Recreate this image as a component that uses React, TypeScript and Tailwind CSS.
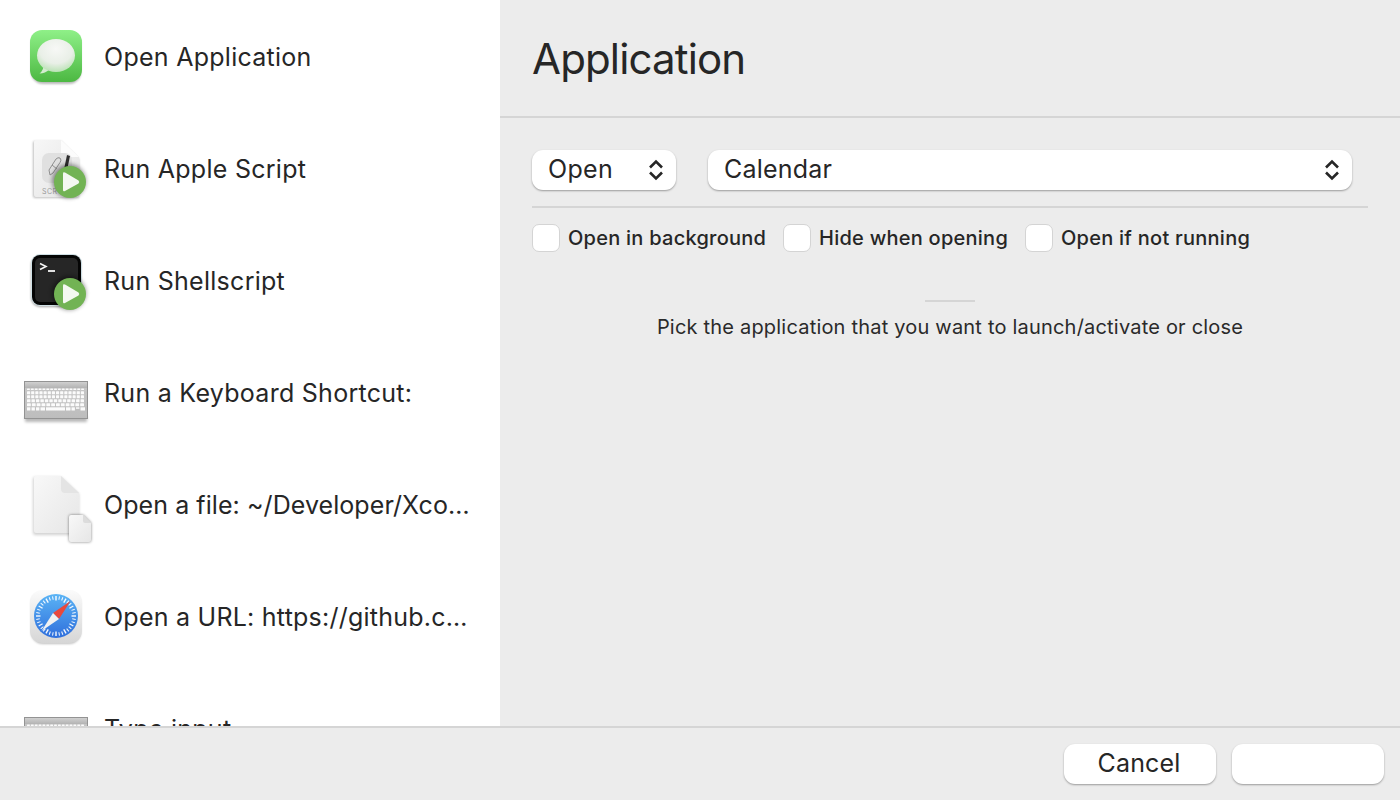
import React from "react";

const Badge = ({ id }: { id: string }) => (
  <g>
    <defs>
      <filter id={id} x="-40%" y="-40%" width="180%" height="180%">
        <feGaussianBlur stdDeviation="2" />
      </filter>
    </defs>
    <circle cx="45" cy="44" r="17" fill="#000" opacity="0.4" filter={`url(#${id})`} />
    <circle cx="46" cy="45" r="16" fill="#72b354" />
    <path d="M39 36.5 Q39 34.5 41 35.5 L54.5 43.5 Q56 45 54.5 46.5 L41 54 Q39 55 39 53 Z" fill="#f4f8f1" />
  </g>
);

const MessagesIcon = () => (
  <svg width="64" height="64" viewBox="0 0 64 64" className="overflow-visible">
    <defs>
      <linearGradient id="mg" x1="0" y1="0" x2="0" y2="1">
        <stop offset="0" stopColor="#8ff088" />
        <stop offset="1" stopColor="#4cb842" />
      </linearGradient>
      <radialGradient id="mb" cx="0.5" cy="0.3" r="0.8">
        <stop offset="0" stopColor="#f7f8f6" />
        <stop offset="0.55" stopColor="#e9efe7" />
        <stop offset="1" stopColor="#a9dda2" />
      </radialGradient>
      <filter id="ms" x="-20%" y="-20%" width="140%" height="140%">
        <feGaussianBlur stdDeviation="1.2" />
      </filter>
    </defs>
    <rect x="7" y="7" width="50" height="52" rx="12" fill="#000" opacity="0.28" filter="url(#ms)" />
    <rect x="6" y="5" width="52" height="52" rx="12" fill="url(#mg)" />
    <path d="M20 38 Q20 45 15.5 48.5 Q21 48.5 26 44 Z" fill="#d4ecd0" />
    <ellipse cx="32" cy="30.5" rx="19" ry="16.5" fill="url(#mb)" />
  </svg>
);

const ScriptIcon = () => (
  <svg width="64" height="64" viewBox="0 0 64 64" className="overflow-visible">
    <defs>
      <linearGradient id="sd" x1="0" y1="0" x2="1" y2="1">
        <stop offset="0" stopColor="#f7f7f7" />
        <stop offset="1" stopColor="#e4e4e4" />
      </linearGradient>
      <filter id="sdb" x="-20%" y="-20%" width="140%" height="140%">
        <feGaussianBlur stdDeviation="0.8" />
      </filter>
    </defs>
    <path d="M9 5 Q9 3 11 3 L37 3 L55 21 L55 59 Q55 60 54 60 L11 60 Q9 60 9 58 Z" fill="#000" opacity="0.25" filter="url(#sdb)" transform="translate(0 1)" />
    <path d="M10 5 Q10 3 12 3 L37 3 L55 20 L55 58 Q55 60 53 60 L12 60 Q10 60 10 58 Z" fill="url(#sd)" />
    <path d="M37 3 L55 20 L41 20 Q37 20 37 16 Z" fill="#fcfcfc" />
    <rect x="18" y="16" width="30" height="30" rx="7" fill="#e0e0e0" />
    <path d="M26 38 L25 33 L32 22 Q34 20 36 21 Q38 23 36 25.5 L29 36 Z M28 28 L33 32" fill="none" stroke="#8f8f8f" strokeWidth="1" />
    <path d="M38 42 L43 18 L46 19 L41 43 Z" fill="#2e2e2e" />
    <text x="18" y="57" fontSize="7" fill="#9a9a9a" fontFamily="Inter, sans-serif" letterSpacing="0.5">SCR</text>
    <Badge id="b1" />
  </svg>
);

const TerminalIcon = () => (
  <svg width="64" height="64" viewBox="0 0 64 64" className="overflow-visible">
    <defs>
      <filter id="ts" x="-20%" y="-20%" width="140%" height="140%">
        <feGaussianBlur stdDeviation="1" />
      </filter>
    </defs>
    <rect x="7" y="7" width="50" height="51" rx="9" fill="#000" opacity="0.35" filter="url(#ts)" />
    <rect x="7" y="5" width="51" height="52" rx="9" fill="#cfdfe4" />
    <rect x="8" y="6" width="49" height="50" rx="8" fill="#050505" />
    <rect x="11" y="9" width="43" height="44" rx="5" fill="#262626" />
    <path d="M16 14.5 L22 17.5 L16 20.5" fill="none" stroke="#f5f5f5" strokeWidth="1.6" />
    <path d="M24 22 H31" stroke="#f5f5f5" strokeWidth="1.8" />
    <Badge id="b2" />
  </svg>
);

const KeyRows = () => {
  const rows = [
    { y: 27.5, h: 1.6, n: 15 },
    { y: 30.3, h: 3, n: 14 },
    { y: 34.3, h: 3, n: 14 },
    { y: 38.3, h: 3, n: 13 },
    { y: 42.3, h: 3, n: 12 },
  ];
  return (
    <g>
      {rows.map((r, i) =>
        Array.from({ length: r.n }).map((_, k) => {
          const w = 58 / r.n;
          return <rect key={`${i}-${k}`} x={3 + k * w} y={r.y} width={w - 1} height={r.h} rx="0.5" fill="#fbfbfb" />;
        })
      )}
      <rect x="3" y="46.3" width="3.4" height="3.2" fill="#fbfbfb" />
      <rect x="7.5" y="46.3" width="3.4" height="3.2" fill="#fbfbfb" />
      <rect x="12" y="46.3" width="3.4" height="3.2" fill="#fbfbfb" />
      <rect x="16.5" y="46.3" width="4.5" height="3.2" fill="#fbfbfb" />
      <rect x="22" y="46.3" width="19" height="3.2" fill="#fbfbfb" />
      <rect x="42" y="46.3" width="4.5" height="3.2" fill="#fbfbfb" />
      <rect x="47.5" y="46.3" width="3.4" height="3.2" fill="#fbfbfb" />
      <rect x="52" y="46.3" width="3.4" height="1.5" fill="#fbfbfb" />
      <rect x="56.5" y="46.3" width="4.5" height="3.2" fill="#fbfbfb" />
    </g>
  );
};

const KeyboardIcon = ({ id }: { id: string }) => (
  <svg width="64" height="64" viewBox="0 0 64 64" className="overflow-visible">
    <defs>
      <linearGradient id={`${id}t`} x1="0" y1="0" x2="0" y2="1">
        <stop offset="0" stopColor="#d2d2d2" />
        <stop offset="0.17" stopColor="#b4b4b4" />
        <stop offset="0.19" stopColor="#c6c6c6" />
        <stop offset="1" stopColor="#bdbdbd" />
      </linearGradient>
      <filter id={`${id}s`} x="-10%" y="-50%" width="120%" height="250%">
        <feGaussianBlur stdDeviation="1.6" />
      </filter>
    </defs>
    <rect x="1" y="55" width="62" height="6" fill="#000" opacity="0.28" filter={`url(#${id}s)`} />
    <rect x="0.5" y="20.5" width="63" height="37" fill={`url(#${id}t)`} stroke="#939393" />
    <KeyRows />
  </svg>
);

const FileIcon = () => (
  <svg width="64" height="64" viewBox="0 0 64 64" className="overflow-visible">
    <defs>
      <linearGradient id="fd" x1="0" y1="0" x2="1" y2="1">
        <stop offset="0" stopColor="#f8f8f8" />
        <stop offset="1" stopColor="#e6e6e6" />
      </linearGradient>
      <filter id="fs" x="-30%" y="-30%" width="160%" height="160%">
        <feGaussianBlur stdDeviation="1.5" />
      </filter>
    </defs>
    <path d="M9 5 Q9 3 11 3 L37 3 L55 20 L55 59 Q55 61 53 61 L11 61 Q9 61 9 59 Z" fill="#000" opacity="0.18" filter="url(#fs)" transform="translate(0 1)" />
    <path d="M10 5 Q10 3 12 3 L37 3 L55 20 L55 58 Q55 60 53 60 L12 60 Q10 60 10 58 Z" fill="url(#fd)" />
    <path d="M37 3 L55 20 L41 20 Q37 20 37 16 Z" fill="#e4e4e4" />
    <path d="M45 44 Q45 42 47 42 L59 42 L67 50 L67 67 Q67 69 65 69 L47 69 Q45 69 45 67 Z" fill="#000" opacity="0.5" filter="url(#fs)" />
    <path d="M45 44 Q45 42 47 42 L59 42 L67 50 L67 67 Q67 69 65 69 L47 69 Q45 69 45 67 Z" fill="url(#fd)" />
    <path d="M59 42 L67 50 L61 50 Q59 50 59 48 Z" fill="#dcdcdc" />
  </svg>
);

const SafariIcon = () => {
  const ticks = Array.from({ length: 36 }).map((_, i) => i * 10);
  return (
    <svg width="64" height="64" viewBox="0 0 64 64" className="overflow-visible">
      <defs>
        <linearGradient id="sf" x1="0" y1="0" x2="0" y2="1">
          <stop offset="0" stopColor="#fbfbfb" />
          <stop offset="1" stopColor="#d6d6d6" />
        </linearGradient>
        <linearGradient id="sc" x1="0" y1="0" x2="0" y2="1">
          <stop offset="0" stopColor="#5bb4f5" />
          <stop offset="1" stopColor="#2f6fdc" />
        </linearGradient>
        <filter id="ssh" x="-20%" y="-20%" width="140%" height="140%">
          <feGaussianBlur stdDeviation="1" />
        </filter>
      </defs>
      <rect x="7" y="7" width="50" height="52" rx="12" fill="#000" opacity="0.25" filter="url(#ssh)" />
      <rect x="6" y="5" width="52" height="53" rx="12" fill="url(#sf)" />
      <circle cx="32" cy="31" r="22" fill="url(#sc)" />
      {ticks.map((a) => (
        <rect key={a} x={a % 30 === 0 ? 31.3 : 31.5} y="11" width={a % 30 === 0 ? 1.4 : 1} height={a % 30 === 0 ? 4.5 : 3.5} fill="#fff" opacity="0.95" transform={`rotate(${a} 32 31)`} />
      ))}
      <path d="M46.5 16 L29 28 L35 34 Z" fill="#e9483d" />
      <path d="M17.5 46 L29 28 L35 34 Z" fill="#f1f1f1" />
    </svg>
  );
};

const rows = [
  { label: "Open Application", tracking: "tracking-[0.27px]", icon: <MessagesIcon /> },
  { label: "Run Apple Script", tracking: "tracking-[0.27px]", icon: <ScriptIcon /> },
  { label: "Run Shellscript", tracking: "tracking-[0.27px]", icon: <TerminalIcon /> },
  { label: "Run a Keyboard Shortcut:", tracking: "tracking-[0.27px]", icon: <KeyboardIcon id="k1" /> },
  { label: "Open a file: ~/Developer/Xco…", tracking: "tracking-[0.07px]", icon: <FileIcon /> },
  { label: "Open a URL: https://github.c…", tracking: "tracking-[0.24px]", icon: <SafariIcon /> },
  { label: "Type input", tracking: "tracking-[0.27px]", icon: <KeyboardIcon id="k2" /> },
];

const Chevrons = () => (
  <svg width="16" height="24" viewBox="0 0 16 24" fill="none" stroke="#262626" strokeWidth="2.6">
    <path d="M2 9.5 L8 3.5 L14 9.5" />
    <path d="M2 14.5 L8 20.5 L14 14.5" />
  </svg>
);

const Check = ({ label, className }: { label: string; className: string }) => (
  <div className={`flex items-center gap-2 ${className}`}>
    <div className="w-7 h-7 rounded-[7px] bg-white border border-[#d4d4d4]" />
    <span className="text-[20px] font-medium text-[#262626] tracking-[0.25px]">{label}</span>
  </div>
);

const btn = "bg-white rounded-[11px] shadow-[0_1px_2px_rgba(0,0,0,0.35)] h-10";

export default function App() {
  return (
    <div className="w-[1400px] h-[800px] flex flex-col overflow-hidden bg-[#ececec] text-[#262626] font-['Inter','Liberation_Sans',sans-serif]">
      <div className="flex flex-1 min-h-0">
        <div className="w-[500px] bg-white overflow-hidden pt-px shrink-0">
          {rows.map((r) => (
            <div key={r.label} className="h-28 flex items-center pl-6 gap-4">
              <div className="w-16 h-16 shrink-0">{r.icon}</div>
              <span className={`text-[25px] pt-0.5 whitespace-nowrap ${r.tracking}`}>{r.label}</span>
            </div>
          ))}
        </div>
        <div className="flex-1 flex flex-col">
          <div className="h-[118px] border-b-2 border-[#d5d5d5] flex items-center pl-8 pt-0.5">
            <h1 className="text-[42px] leading-none font-normal tracking-[-0.85px]">Application</h1>
          </div>
          <div className="px-8 pt-8">
            <div className="flex gap-8 pr-4 pb-4 border-b-2 border-[#d5d5d5]">
              <div className={`${btn} w-[144px] flex items-center justify-between pl-4 pr-3 text-[25px] tracking-[0.35px]`}>
                <span>Open</span>
                <Chevrons />
              </div>
              <div className={`${btn} flex-1 flex items-center justify-between pl-4 pr-3 text-[25px] tracking-[0.2px]`}>
                <span>Calendar</span>
                <Chevrons />
              </div>
            </div>
            <div className="flex pt-[15px]">
              <Check label="Open in background" className="w-[251px]" />
              <Check label="Hide when opening" className="w-[242px]" />
              <Check label="Open if not running" className="" />
            </div>
            <div className="w-[50px] h-0.5 bg-[#d5d5d5] mx-auto mt-[47px]" />
            <p className="text-center text-[20px] mt-[13px] leading-[24px] tracking-[0.2px] text-[#2a2a2a]">Pick the application that you want to launch/activate or close</p>
          </div>
        </div>
      </div>
      <div className="h-[74px] shrink-0 border-t-2 border-[#d5d5d5] flex justify-end items-start gap-4 pt-4 pr-4">
        <div className={`${btn} w-[152px] flex items-center justify-center text-[25px] tracking-[0.15px] pr-0.5`}>Cancel</div>
        <div className={`${btn} w-[152px]`} />
      </div>
    </div>
  );
}
